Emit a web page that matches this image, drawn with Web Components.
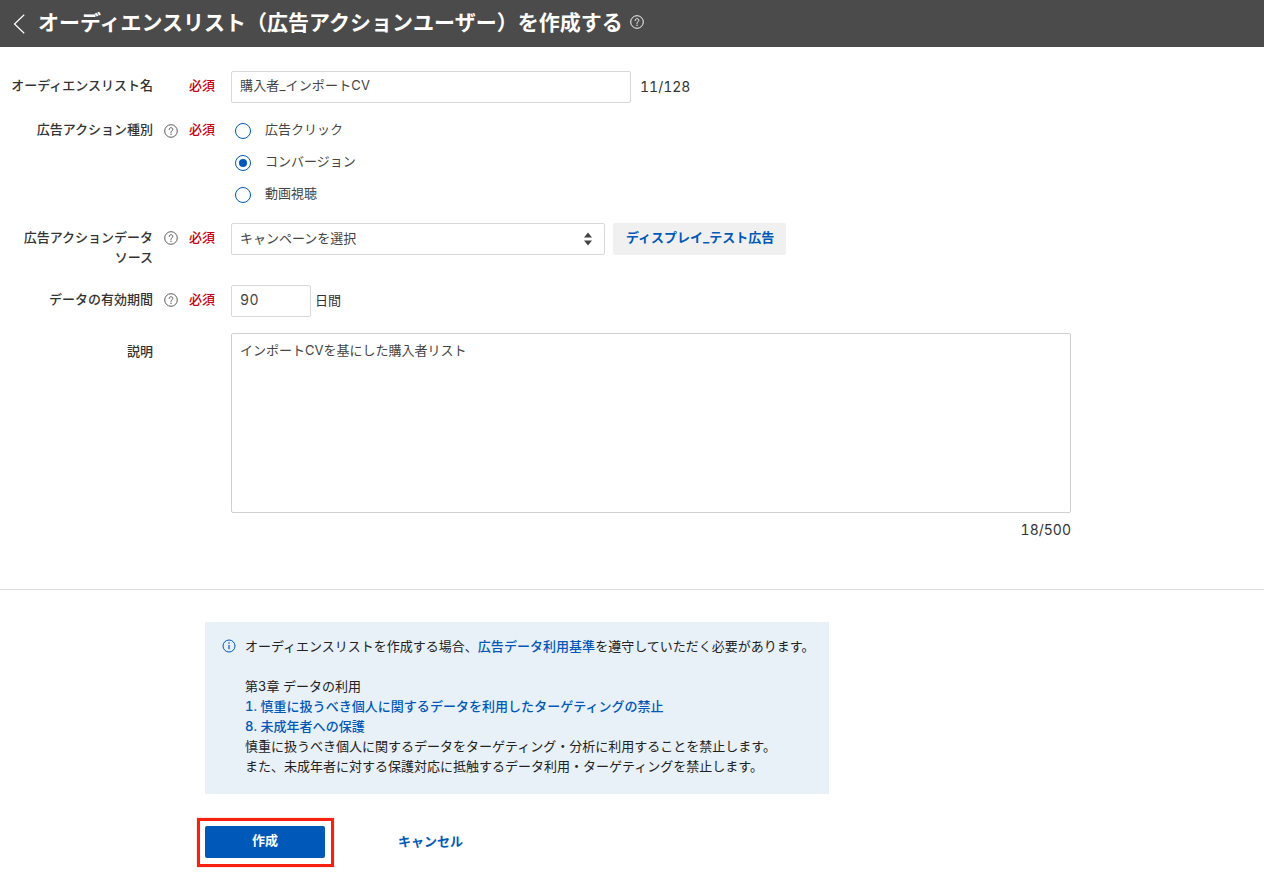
<!DOCTYPE html>
<html lang="ja">
<head>
<meta charset="utf-8">
<title>オーディエンスリストを作成する</title>
<style>
html,body{margin:0;padding:0;background:#fff;}
body{font-family:Inter,"Noto Sans CJK JP",sans-serif;font-size:13px;color:#333;line-height:20px;width:1264px;height:876px;overflow:hidden;font-variant-numeric:tabular-nums;}
</style>
</head>
<body>
<app-page>
  <page-header>オーディエンスリスト（広告アクションユーザー）を作成する</page-header>
  <audience-form>
    <form-row label="オーディエンスリスト名" required>
      <field-line>
        <text-box width="400">購入者_インポートCV</text-box>
        <plain-note gap="9" latin>11/128</plain-note>
      </field-line>
    </form-row>
    <form-row label="広告アクション種別" help required pad="0" helppad="5">
      <radio-group>
        <radio-option>広告クリック</radio-option>
        <radio-option checked>コンバージョン</radio-option>
        <radio-option>動画視聴</radio-option>
      </radio-group>
    </form-row>
    <form-row label="広告アクションデータソース" help required>
      <field-line>
        <select-box width="374">キャンペーンを選択</select-box>
        <tag-button>ディスプレイ_テスト広告</tag-button>
      </field-line>
    </form-row>
    <form-row label="データの有効期間" help required>
      <field-line>
        <text-box width="80" latin>90</text-box>
        <plain-note gap="4">日間</plain-note>
      </field-line>
    </form-row>
    <form-row label="説明" pad="8">
      <area-box count="18/500">インポートCVを基にした購入者リスト</area-box>
    </form-row>
  </audience-form>
  <footer-panel>
    <info-panel>
      <info-line>オーディエンスリストを作成する場合、<blue-link>広告データ利用基準</blue-link>を遵守していただく必要があります。</info-line>
      <info-line></info-line>
      <info-line>第3章 データの利用</info-line>
      <info-line><blue-link>1. 慎重に扱うべき個人に関するデータを利用したターゲティングの禁止</blue-link></info-line>
      <info-line><blue-link>8. 未成年者への保護</blue-link></info-line>
      <info-line>慎重に扱うべき個人に関するデータをターゲティング・分析に利用することを禁止します。</info-line>
      <info-line>また、未成年者に対する保護対応に抵触するデータ利用・ターゲティングを禁止します。</info-line>
    </info-panel>
    <action-bar></action-bar>
  </footer-panel>
</app-page>
<script>
const define=(name,css,html)=>{
  customElements.define(name,class extends HTMLElement{
    constructor(){super();this.attachShadow({mode:'open'});}
    connectedCallback(){
      const h=typeof html==='function'?html(this):html;
      this.shadowRoot.innerHTML=`<style>${css}</style>${h}`;
      const w=this.getAttribute('width');
      if(w)this.style.width=w+'px';
      const g=this.getAttribute('gap');
      if(g)this.style.marginLeft=g+'px';
    }
  });
};
const helpSvg=(size,color)=>`<svg width="${size}" height="${size}" viewBox="0 0 16 16" fill="none" aria-hidden="true"><circle cx="8" cy="8" r="7.200" stroke="${color}" stroke-width="1.100"/><path d="M5.900 6.300C5.900 5 6.900 4.200 8 4.200c1.200 0 2.100.8 2.100 1.900 0 1-.6 1.400-1.200 1.800-.6.400-.9.800-.9 1.500v.3" stroke="${color}" stroke-width="1.100" stroke-linecap="round"/><circle cx="8" cy="11.700" r=".8" fill="${color}"/></svg>`;

define('app-page',':host{display:block}','<slot></slot>');

define('page-header',`
  :host{display:flex;align-items:center;height:47px;background:#4b4b4b;color:#fff;}
  svg{display:block}
  .back{margin-left:12px;width:14px;height:20px;margin-right:13px;}
  h1{margin:-2px 0 0 -1px;font:bold 21px/30px Inter,"Noto Sans CJK JP",sans-serif;letter-spacing:0;white-space:nowrap;}
  .h{margin:-3px 0 0 7px;display:flex}
`,`<svg class="back" viewBox="0 0 14 20" fill="none"><path d="M12.200.8 2.500 10l9.700 9.200" stroke="#fff" stroke-width="1.200"/></svg><h1><slot></slot></h1><span class="h">${helpSvg(14,'#fff')}</span>`);

define('audience-form',`
  :host{display:flex;flex-direction:column;gap:16px;padding-top:24px;height:543px;box-sizing:border-box;border-bottom:1px solid #ddd;}
`,'<slot></slot>');

define('form-row',`
  :host{display:grid;grid-template-columns:145px 36px 42px 1fr;margin-left:8px;}
  .label{color:#333;text-align:right;line-height:20px;font-weight:500;line-break:strict;padding-bottom:2px;}
  .help svg{display:block;margin-left:11px}
  .req{color:#c9000f;line-height:20px;white-space:nowrap;font-weight:500;}
`,el=>{
  const pad=el.getAttribute('pad')??4;
  const hp=el.getAttribute('helppad')??8;
  return `<div class="label" style="padding-top:${pad}px">${el.getAttribute('label')}</div>
  <div class="help" style="padding-top:${hp}px">${el.hasAttribute('help')?helpSvg(14,'#555'):''}</div>
  <div class="req" style="padding-top:${pad}px">${el.hasAttribute('required')?'必須':''}</div>
  <div class="ctl"><slot></slot></div>`;
});

define('field-line',':host{display:flex;align-items:center;}','<slot></slot>');

const boxCss=`box-sizing:border-box;border:1px solid #d8d8d8;border-radius:2px;background:#fff;height:32px;padding:0 8px;line-height:27px;color:#444;`;
define('text-box',`:host{display:block;${boxCss}letter-spacing:.15px}:host([latin]){font-size:14px;letter-spacing:.5px}`,'<slot></slot>');

define('plain-note',':host{display:block;color:#333;white-space:nowrap;margin-top:-3px}:host([latin]){font-size:14px;margin-top:-1px}','<slot></slot>');

define('select-box',`:host{display:flex;align-items:center;justify-content:space-between;${boxCss}padding-right:10px}
  svg{display:block}
  span{margin-top:-2px}`,
  `<span><slot></slot></span><svg width="12" height="16" viewBox="0 0 12 16"><path d="M6 1.500 10 6.500H2z M6 14.500 2 9.500h8z" fill="#444"/></svg>`);

define('tag-button',`:host{display:block;margin-left:8px;height:32px;box-sizing:border-box;padding:0 12px 0 13px;background:#f0f0f0;border-radius:2px;color:#0058b8;font-weight:bold;line-height:29px;white-space:nowrap;}`,'<slot></slot>');

define('radio-group',':host{display:flex;flex-direction:column;gap:10px;padding-bottom:2px;}','<slot></slot>');
define('radio-option',`:host{display:flex;align-items:center;height:22px;padding-left:4px;color:#444;}
  .c{width:16px;height:16px;box-sizing:border-box;border:1.300px solid #0058b8;border-radius:50%;margin-right:14px;display:flex;align-items:center;justify-content:center;background:#fff;margin-top:2px}
  .d{width:8px;height:8px;border-radius:50%;background:#0058b8;}
  .x{margin-top:-2px}`,
  el=>`<span class="c">${el.hasAttribute('checked')?'<span class="d"></span>':''}</span><span class="x"><slot></slot></span>`);

define('area-box',`:host{display:block;width:840px;}
  .t{box-sizing:border-box;height:180px;border:1px solid #d0d0d0;border-radius:2px;padding:6px 8px;color:#444;line-height:20px}
  .n{text-align:right;margin-top:7px;color:#333;font-size:14px;line-height:20px}`,
  el=>`<div class="t"><slot></slot></div><div class="n">${el.getAttribute('count')}</div>`);

define('footer-panel',':host{display:block;padding:32px 0 0 205px;}','<slot></slot>');
define('info-panel',`:host{display:block;width:624px;height:172px;box-sizing:border-box;background:#e8f0f8;padding:14px 0 0 17px;position:relative;color:#222;}
  .i{position:absolute;left:17px;top:17px;display:block}
  .b{padding-left:23px}`,
  `<svg class="i" width="14" height="14" viewBox="0 0 14 14" fill="none"><circle cx="7" cy="7" r="6" stroke="#0058b8"/><path d="M7 6v4.300" stroke="#0058b8" stroke-width="1.200"/><circle cx="7" cy="4" r=".8" fill="#0058b8"/></svg><div class="b"><slot></slot></div>`);
define('info-line',':host{display:block;height:20px;line-height:20px;white-space:nowrap;}','<slot></slot>');
define('blue-link',':host{color:#0058b8;font-weight:500;letter-spacing:.03px}','<slot></slot>');

define('action-bar',`:host{display:flex;align-items:center;margin-top:32px;height:32px;}
  .btn{position:relative;width:120px;height:32px;background:#0058b8;border-radius:2px;color:#fff;font-weight:bold;text-align:center;line-height:29px;}
  .mark{position:absolute;left:-8px;top:-8px;right:-9px;bottom:-9px;border:3px solid #f8210f;box-sizing:border-box;pointer-events:none;box-shadow:0 0 1px #f8210f88;}
  .cancel{margin:-2px 0 0 73px;color:#0058b8;font-weight:bold;}`,
  `<div class="btn">作成<span class="mark"></span></div><div class="cancel">キャンセル</div>`);
</script>
</body>
</html>
